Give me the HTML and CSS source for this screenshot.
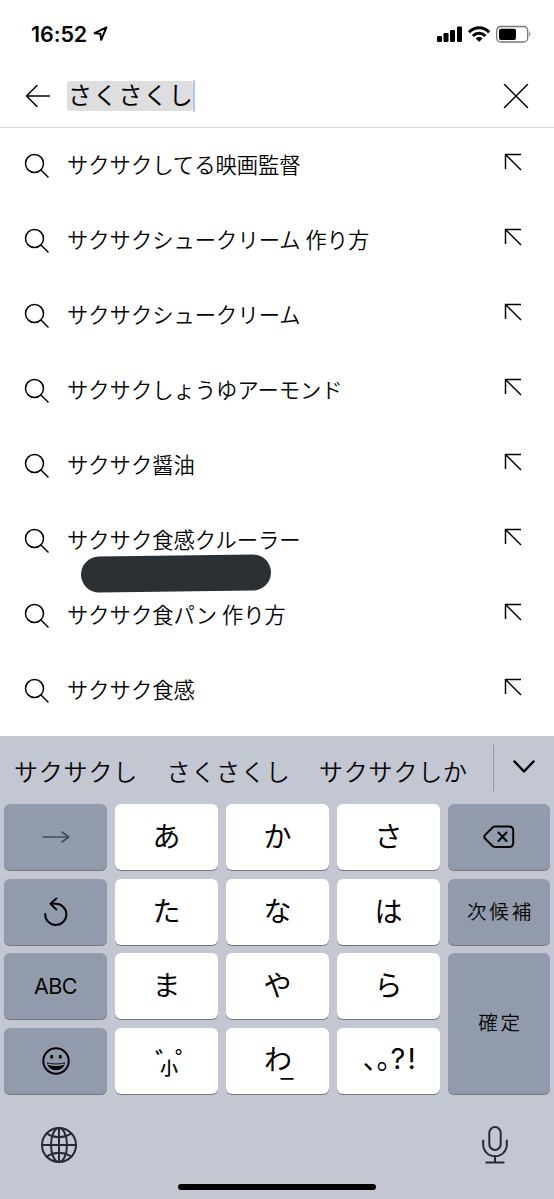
FILE: index.html
```
<!DOCTYPE html>
<html lang="ja">
<head>
<meta charset="utf-8">
<title>検索</title>
<link rel="stylesheet" href="styles.css">
</head>
<body>
<svg class="defs" width="0" height="0">
  <symbol id="search" viewBox="0 0 26 26"><circle cx="10.5" cy="10.5" r="9"/><path d="M17 17l7.5 7.5"/></symbol>
  <symbol id="insert" viewBox="0 0 18 18"><path d="M1.5 16V1.5H17M1.5 1.5L17 17"/></symbol>
</svg>
<main class="screen">
  <header class="status">
    <span class="time">16:52</span>
    <svg class="location" width="15" height="16" viewBox="0 0 15 16"><path d="M13.400 1.300L1.600 7.200L7.300 7.700L8.200 13.800z"/></svg>
    <svg class="indicators" width="96" height="18" viewBox="0 0 96 18">
      <rect x="1" y="11" width="5" height="6" rx="1.2"/><rect x="7.5" y="8" width="5" height="9" rx="1.2"/><rect x="14" y="5" width="5" height="12" rx="1.2"/><rect x="21" y="1.5" width="5" height="15.5" rx="1.2"/>
      <g class="wifi"><path d="M33 7.2C38.8 1.2 47.600 1.200 53.200 7.200"/><path d="M36.800 11C40.500 7.300 45.700 7.300 49.400 11"/></g>
      <path d="M39.600 13.200Q43.100 10.600 46.600 13.200L43.100 17z"/>
      <rect class="shell" x="60.700" y="1.500" width="31" height="15.500" rx="4"/><rect x="63" y="3.700" width="17" height="11.200" rx="2"/><path class="tip" d="M93.300 6.600Q95.500 9.200 93.300 11.800z"/>
    </svg>
  </header>
  <section class="searchbar">
    <svg class="back" width="26" height="24" viewBox="0 0 26 24"><path d="M12 1.500L1.500 12L12 22.500M1.500 12H24.500"/></svg>
    <div class="query"><span class="marked">さくさくし</span><i class="caret"></i></div>
    <svg class="clear" width="26" height="26" viewBox="0 0 26 26"><path d="M1.500 1.500L24.500 24.500M24.500 1.500L1.500 24.500"/></svg>
  </section>
  <ul class="suggestions">
    <li><svg class="glass"><use href="#search"/></svg><span>サクサクしてる映画監督</span><svg class="insert"><use href="#insert"/></svg></li>
    <li><svg class="glass"><use href="#search"/></svg><span>サクサクシュークリーム 作り方</span><svg class="insert"><use href="#insert"/></svg></li>
    <li><svg class="glass"><use href="#search"/></svg><span>サクサクシュークリーム</span><svg class="insert"><use href="#insert"/></svg></li>
    <li><svg class="glass"><use href="#search"/></svg><span>サクサクしょうゆアーモンド</span><svg class="insert"><use href="#insert"/></svg></li>
    <li><svg class="glass"><use href="#search"/></svg><span>サクサク醤油</span><svg class="insert"><use href="#insert"/></svg></li>
    <li><svg class="glass"><use href="#search"/></svg><span>サクサク食感クルーラー</span><svg class="insert"><use href="#insert"/></svg><svg class="marker" width="192" height="40" viewBox="0 0 192 40"><path d="M19 20.500L173 18.500"/></svg></li>
    <li><svg class="glass"><use href="#search"/></svg><span>サクサク食パン 作り方</span><svg class="insert"><use href="#insert"/></svg></li>
    <li><svg class="glass"><use href="#search"/></svg><span>サクサク食感</span><svg class="insert"><use href="#insert"/></svg></li>
  </ul>
  <section class="keyboard">
    <div class="candidates">
      <span>サクサクし</span><span>さくさくし</span><span>サクサクしか</span>
      <div class="expand"><svg width="22" height="14" viewBox="0 0 22 14"><path d="M1.500 1.500L11 11.500L20.500 1.500"/></svg></div>
    </div>
    <div class="keys">
      <div class="key fn"><svg class="next" width="28" height="14" viewBox="0 0 28 14"><path d="M1 7H26.500M20 2L26.800 7L20 12"/></svg></div>
      <div class="key">あ</div><div class="key">か</div><div class="key">さ</div>
      <div class="key fn"><svg width="32" height="24" viewBox="0 0 32 24"><path d="M12 1.500H26Q30.200 1.500 30.200 5.500V18Q30.200 22 26 22H12Q10.500 22 9.300 20.800L2 13.500Q.5 11.800 2 10.100L9.300 2.700Q10.500 1.500 12 1.500zM15.500 7.500L23.500 16M23.500 7.500L15.500 16"/></svg></div>
      <div class="key fn"><svg width="26" height="30" viewBox="0 0 26 30"><path d="M2.200 17A10.600 10.600 0 1 0 12.800 6.800H8M13.300 1.500L7.500 6.800L13.300 12.500"/></svg></div>
      <div class="key">た</div><div class="key">な</div><div class="key">は</div>
      <div class="key fn kanji">次候補</div>
      <div class="key fn abc">ABC</div>
      <div class="key">ま</div><div class="key">や</div><div class="key">ら</div>
      <div class="key fn kanji tall">確定</div>
      <div class="key fn"><svg width="28" height="28" viewBox="0 0 28 28"><circle cx="14" cy="14" r="12.700"/><ellipse class="solid" cx="9.700" cy="9.700" rx="1.600" ry="2"/><ellipse class="solid" cx="18.300" cy="9.700" rx="1.600" ry="2"/><path class="solid" d="M5 15.300Q14 17.800 23 15.300Q22 23.200 14 23.200Q6 23.200 5 15.300z"/><path class="teeth" d="M6.800 17.300Q14 19.300 21.200 17.300"/></svg></div>
      <div class="key"><svg class="chars" width="103" height="66" viewBox="0 0 103 66"><text class="mark" x="40" y="42">゛</text><text class="mark" x="60" y="42">゜</text><text class="small" x="45" y="46.500">小</text></svg></div>
      <div class="key"><svg class="chars" width="103" height="66" viewBox="0 0 103 66"><text x="38" y="42">わ</text><text class="latin thin" x="54.500" y="50">_</text></svg></div>
      <div class="key"><svg class="chars" width="103" height="66" viewBox="0 0 103 66"><text x="25.500" y="41">、</text><text x="39.500" y="41">。</text><text class="latin" x="53.500 70.500" y="41">?!</text></svg></div>
    </div>
    <footer class="dock">
      <svg width="38" height="38" viewBox="0 0 38 38"><circle cx="19" cy="19" r="17"/><ellipse cx="19" cy="19" rx="8" ry="17"/><path d="M19 2V36M2 19H36M6.500 7.500Q19 15 31.500 7.500M6.500 30.500Q19 23 31.500 30.500"/></svg>
      <svg width="28" height="40" viewBox="0 0 28 40"><rect x="8.300" y="2" width="11.400" height="23" rx="5.700"/><path d="M2.200 15.500V19.500A11.800 11.800 0 0 0 25.800 19.500V15.500M14 31V37.500M5.300 37.500H22.700"/></svg>
    </footer>
    <div class="home"></div>
  </section>
</main>
</body>
</html>
```
FILE: styles.css
```
* { box-sizing: border-box; }
body { margin: 0; background: #fff; color: #050505; font-family: "Noto Sans CJK JP", sans-serif; }
svg { display: block; flex: none; fill: none; stroke: currentColor; }
.defs { position: absolute; }
.screen { width: 554px; height: 1199px; overflow: hidden; display: flex; flex-direction: column; }

.status { height: 66px; display: flex; align-items: center; padding: 1px 22px 0 31px; }
.time { width: 61.500px; font: 600 21.500px/24px Inter, sans-serif; letter-spacing: -0.1px; }
.location { stroke-width: 2; stroke-linejoin: round; }
.indicators { margin-left: auto; fill: #000; stroke: none; }
.wifi { fill: none; stroke: #000; stroke-width: 3; }
.shell { fill: none; stroke: #777; stroke-width: 1.3; }
.tip { fill: #777; }

.searchbar { height: 62px; display: flex; align-items: center; padding: 0 25px 1px; border-bottom: 1.500px solid #d8d8d8; }
.back, .clear { stroke-width: 1.500; stroke-linecap: round; }
.query { display: flex; align-items: center; margin-left: 16px; }
.marked { width: 126px; height: 30px; padding-left: 1px; border-radius: 3px; background: #dedee0; font-size: 24px; line-height: 26px; letter-spacing: 1.200px; white-space: nowrap; }
.caret { width: 2px; height: 32px; background: #b9c6f5; }
.clear { margin-left: auto; }

.suggestions { height: 608px; margin: 0; padding: 0; list-style: none; flex: none; }
.suggestions li { position: relative; height: 75px; display: flex; align-items: center; padding: 0 32px 0 24px; font-size: 21.300px; line-height: 30px; font-weight: 350; }
.suggestions span { padding-bottom: 3px; }
.glass { width: 26px; height: 26px; margin-right: 17px; stroke-width: 1.500; }
.insert { width: 18px; height: 18px; margin: -7px 0 0 auto; stroke-width: 1.500; }
.marker { position: absolute; left: 80px; top: 51px; z-index: 1; stroke: #2b3034; stroke-width: 36; stroke-linecap: round; }

.keyboard { height: 463px; background: #c3c7d2; display: flex; flex-direction: column; }
.candidates { height: 68px; display: flex; align-items: center; padding-left: 14px; font-size: 24px; font-weight: 350; letter-spacing: .8px; white-space: nowrap; }
.candidates span { width: 152.500px; }
.candidates span:nth-child(3) { width: 174px; }
.expand { height: 46px; width: 61px; margin-top: -5px; border-left: 1px solid #9799a1; display: flex; align-items: center; justify-content: center; }
.expand svg { stroke-width: 2.500; stroke-linecap: round; stroke-linejoin: round; margin-top: -1px; }
.keys { display: grid; grid-template-columns: repeat(4, 103px) 102px; grid-template-rows: repeat(4, 66px); gap: 8.600px 8px; padding: 0 4px; }
.key { display: flex; align-items: center; justify-content: center; border-radius: 6px; background: #fff; box-shadow: 0 1px 0 #74767e; font-size: 28px; line-height: 38px; padding-bottom: 4px; }
.fn { background: #929bac; padding: 0; }
.fn svg { stroke-width: 2; stroke-linecap: round; stroke-linejoin: round; }
.fn .next { stroke: #4a4e59; stroke-width: 1.700; }
.kanji { font-size: 19.500px; font-weight: 350; letter-spacing: 2.800px; padding: 0 0 2px 3px; }
.tall { grid-column: 5; grid-row: 3 / span 2; }
.abc { font: 400 21.500px Inter, sans-serif; letter-spacing: -.5px; }
.solid { fill: #050505; stroke: none; }
.teeth { stroke: #929bac; stroke-width: 1.700; }
.chars { fill: #050505; stroke: none; font-size: 28px; margin-bottom: -4px; }
.mark { font-size: 25px; font-weight: 500; }
.small { font-size: 18px; font-weight: 500; }
.latin { font-family: Inter, sans-serif; font-size: 29px; }
.thin { font-weight: 300; }
.dock { height: 91px; display: flex; justify-content: space-between; align-items: center; padding: 11px 45px 0 40px; color: #252b33; }
.dock svg { stroke-width: 2; stroke-linecap: round; }
.home { width: 198px; height: 6px; border-radius: 3px; background: #000; margin: -1px auto 0; }
```
